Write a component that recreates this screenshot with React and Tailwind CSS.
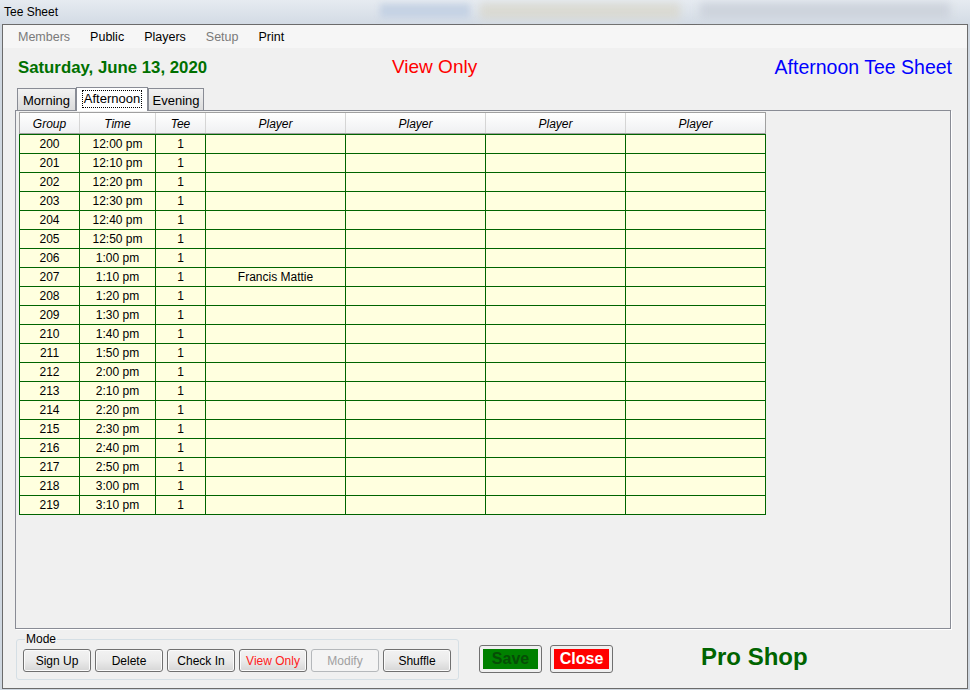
import React from 'react';

const FONT = { fontFamily: '"Liberation Sans", Arial, sans-serif' };

// build the afternoon rows: groups 200..219, every 10 min from noon
const rows = Array.from({ length: 20 }, (_, i) => {
    const mins = 12 * 60 + i * 10;
    const h = Math.floor(mins / 60);
    const m = mins % 60;
    const hh = h > 12 ? h - 12 : h;
    return {
        group: 200 + i,
        time: `${hh}:${String(m).padStart(2, '0')} pm`,
        tee: 1,
        players: i === 7 ? ['Francis Mattie', '', '', ''] : ['', '', '', ''],
    };
});

const COLS = 'grid grid-cols-[60px_76px_50px_140px_140px_140px_140px]';

const MenuItem = ({ label, disabled }) => (
    <span className={disabled ? 'text-[#7a7a7a]' : 'text-black'}>{label}</span>
);

const WinButton = ({ label, red, disabled }) => (
    <button
        className={
            disabled
                ? 'w-[68px] h-[23px] rounded-[3px] border border-[#b5b8bb] bg-[#f4f4f4] text-[12px] text-[#a0a0a0]'
                : `w-[68px] h-[23px] rounded-[3px] border border-[#707070] bg-gradient-to-b from-[#f2f2f2] via-[#ebebeb] to-[#d6d6d6] shadow-[inset_0_0_0_1px_#fbfbfb] text-[12px] ${red ? 'text-[#ff2020]' : 'text-black'}`
        }
    >
        {label}
    </button>
);

const Tab = ({ label, active, width }) =>
    active ? (
        <div className={`relative z-10 ${width} h-[24px] shrink-0 border border-b-0 border-[#898c95] bg-white flex items-start justify-center pt-[2px]`}>
            <span className="border border-dotted border-black px-[1px] leading-[16px]">{label}</span>
        </div>
    ) : (
        <div className={`${width} h-[22px] shrink-0 mb-[1px] border border-b-0 border-[#898c95] bg-gradient-to-b from-[#f2f2f2] to-[#dcdcdc] flex items-center justify-center pt-[3px]`}>
            {label}
        </div>
    );

export default function App() {
    return (
        <div className="w-[970px] h-[690px] overflow-hidden bg-[#cfd7e0] relative" style={FONT}>
            {/* blurred desktop behind the window title */}
            <div className="h-[24px] relative bg-gradient-to-b from-[#e6ebf1] to-[#d3dbe5]">
                <div className="absolute left-[380px] top-[4px] w-[90px] h-[14px] bg-[#c5d2e4] blur-[3px]" />
                <div className="absolute left-[480px] top-[3px] w-[200px] h-[16px] bg-[#d9d6c8] blur-[4px] opacity-70" />
                <div className="absolute left-[700px] top-[3px] w-[250px] h-[16px] bg-[#cdd3dc] blur-[4px]" />
                <span className="absolute left-[4px] top-[3px] text-[12px] text-black">Tee Sheet</span>
            </div>

            <div className="ml-[2px] w-[966px] h-[665px] border border-[#6b6b6b] bg-[#f0f0f0] flex flex-col">
                {/* menu */}
                <div className="h-[23px] bg-[#f6f6f6] flex items-center pl-[15px] pt-[2px] gap-[20px] text-[12.5px]">
                    <MenuItem label="Members" disabled />
                    <MenuItem label="Public" />
                    <MenuItem label="Players" />
                    <MenuItem label="Setup" disabled />
                    <MenuItem label="Print" />
                </div>

                {/* heading line */}
                <div className="h-[39px] flex items-center pl-[15px] pr-[15px]">
                    <div className="w-[374px] text-[16.8px] font-bold text-[#007000]">Saturday, June 13, 2020</div>
                    <div className="text-[19px] text-[#ff0000]">View Only</div>
                    <div className="flex-1 text-right text-[19.5px] text-[#0000ff]">Afternoon Tee Sheet</div>
                </div>

                {/* tabs */}
                <div className="ml-[12px] w-[936px]">
                    <div className="h-[24px] -mb-[1px] pl-[2px] flex items-end text-[13px] text-black">
                        <Tab label="Morning" width="w-[59px]" />
                        <Tab label="Afternoon" width="w-[72px]" active />
                        <Tab label="Evening" width="w-[56px]" />
                    </div>
                    <div className="h-[519px] border border-[#898c95] bg-[#f0f0f0] pl-[3px] pt-[1px] shadow-[1px_1px_0_#ffffff]">
                        <div className="w-[747px] text-[12px] text-black">
                            <div className={`${COLS} h-[22px] border border-[#a0a0a0] border-r-0 bg-gradient-to-b from-[#ffffff] to-[#eff0f2] italic`}>
                                {['Group', 'Time', 'Tee', 'Player', 'Player', 'Player', 'Player'].map((h, i) => (
                                    <div key={i} className="flex items-center justify-center pt-[1px] border-r border-[#d5d5d5] last:border-[#a0a0a0]">
                                        {h}
                                    </div>
                                ))}
                            </div>
                            <div className="border-l border-t border-[#006400] bg-[#ffffdf]">
                                {rows.map(r => (
                                    <div key={r.group} className={`${COLS} h-[19px]`}>
                                        {[r.group, r.time, r.tee, ...r.players].map((v, i) => (
                                            <div key={i} className="flex items-center justify-center border-r border-b border-[#006400]">
                                                {v}
                                            </div>
                                        ))}
                                    </div>
                                ))}
                            </div>
                        </div>
                    </div>
                </div>

                {/* bottom controls */}
                <div className="flex items-start">
                    <fieldset className="ml-[13px] mt-[3px] w-[443px] h-[48px] border border-[#d5dfe5] rounded-[3px] pl-[6px] pr-[6px]">
                        <legend className="ml-[2px] px-[1px] text-[12px] leading-[14px] text-black">Mode</legend>
                        <div className="mt-[3px] flex gap-[4px]">
                            <WinButton label="Sign Up" />
                            <WinButton label="Delete" />
                            <WinButton label="Check In" />
                            <WinButton label="View Only" red />
                            <WinButton label="Modify" disabled />
                            <WinButton label="Shuffle" />
                        </div>
                    </fieldset>

                    <button className="ml-[20px] mt-[16px] w-[63px] h-[28px] rounded-[3px] border border-[#707070] bg-[#f0f0f0] p-[3px]">
                        <div className="w-full h-full bg-[#008000] flex items-center justify-center text-[16px] font-bold text-[#064d06]">
                            Save
                        </div>
                    </button>
                    <button className="ml-[8px] mt-[16px] w-[63px] h-[28px] rounded-[3px] border border-[#707070] bg-[#f0f0f0] p-[3px]">
                        <div className="w-full h-full bg-[#ff0000] flex items-center justify-center text-[16px] font-bold text-white">
                            Close
                        </div>
                    </button>

                    <div className="ml-[88px] mt-[14px] text-[24px] font-bold text-[#006400] leading-[28px]">Pro Shop</div>
                </div>
            </div>
        </div>
    );
}
